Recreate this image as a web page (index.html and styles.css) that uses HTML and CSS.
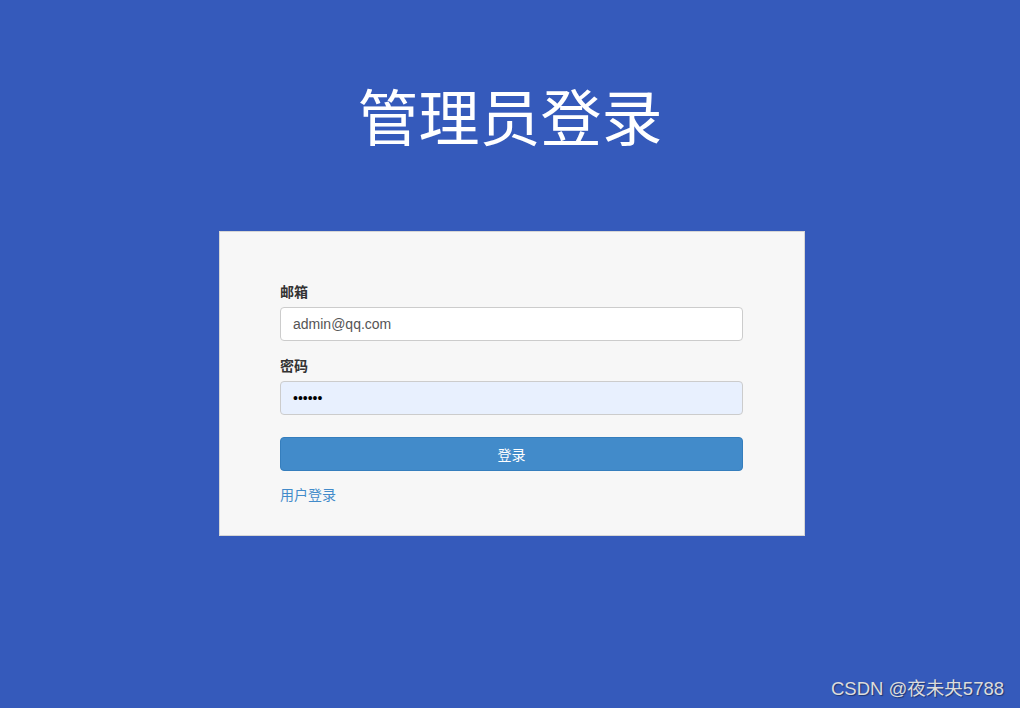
FILE: index.html
```html
<!DOCTYPE html>
<html>
<head>
<meta charset="utf-8">
<title>管理员登录</title>
<link rel="stylesheet" href="styles.css">
</head>
<body>
  <h1 class="title">管理员登录</h1>
  <div class="login-box">
    <form class="login-form">
      <div class="form-group">
        <label for="email">邮箱</label>
        <input id="email" class="form-control" type="text" value="admin@qq.com">
      </div>
      <div class="form-group">
        <label for="pwd">密码</label>
        <input id="pwd" class="form-control filled" type="password" value="123456">
      </div>
      <button type="button" class="btn-login">登录</button>
      <a class="user-link" href="#">用户登录</a>
    </form>
  </div>
  <div class="watermark">CSDN @夜未央5788</div>
</body>
</html>
```
FILE: styles.css
```css
* {
  box-sizing: border-box;
}
html, body {
  margin: 0;
  height: 100%;
}
body {
  background-color: #355abb;
  font-family: "Liberation Sans", "Noto Sans CJK SC", sans-serif;
  font-size: 14px;
  color: #333;
  position: relative;
}
.title {
  margin: 0;
  padding-top: 75px;
  height: 231px;
  text-align: center;
  color: #fff;
  font-family: "Noto Sans CJK SC", sans-serif;
  font-weight: 400;
  font-size: 61px;
  line-height: 80px;
}
.login-box {
  width: 586px;
  margin-left: 219px;
  background-color: #f7f7f7;
  border: 1px solid #d6d6d6;
  padding: 50px 61px 30px 60px;
}
.form-group {
  margin-bottom: 15px;
}
.form-group label {
  display: block;
  font-weight: bold;
  line-height: 20px;
  margin-bottom: 5px;
  color: #333;
}
.form-control {
  display: block;
  width: 100%;
  height: 34px;
  padding: 6px 12px;
  font-family: "Liberation Sans", sans-serif;
  font-size: 14px;
  color: #555;
  background-color: #fff;
  border: 1px solid #ccc;
  border-radius: 4px;
  outline: none;
}
.form-control.filled {
  background-color: #e8f0fe;
  color: #000;
}
.btn-login {
  display: block;
  width: 100%;
  height: 34px;
  margin-top: 22px;
  margin-bottom: 14px;
  background-color: #428bca;
  border: 1px solid #357ebd;
  border-radius: 4px;
  color: #fff;
  font-family: "Noto Sans CJK SC", sans-serif;
  font-size: 14px;
}
.user-link {
  display: block;
  line-height: 20px;
  color: #428bca;
  text-decoration: none;
}
.watermark {
  position: absolute;
  right: 16px;
  bottom: 8px;
  color: #dcdcdc;
  font-family: "Liberation Sans", "Noto Sans CJK SC", sans-serif;
  font-size: 18.5px;
  text-shadow: 1px 1px 1px rgba(0, 0, 0, 0.4);
}
```
